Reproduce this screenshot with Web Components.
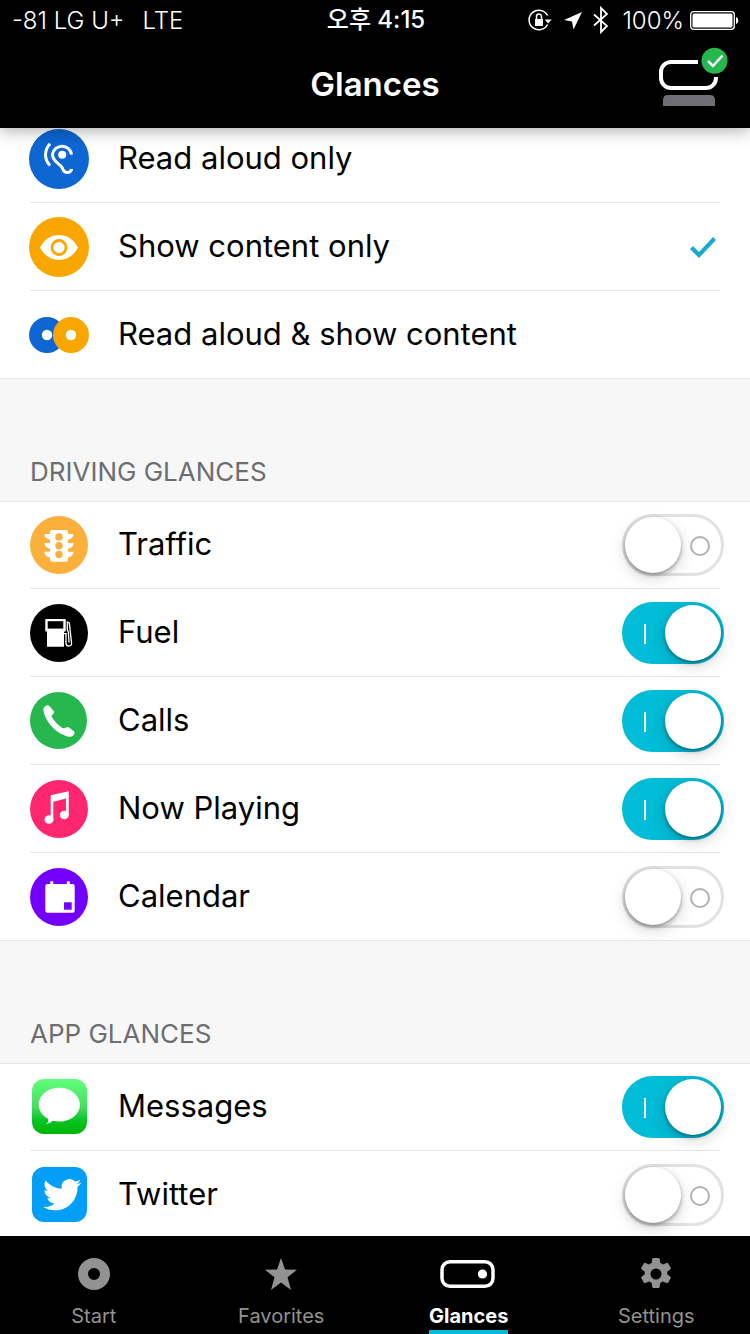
<!DOCTYPE html>
<html lang="en">
<head>
<meta charset="utf-8">
<meta name="viewport" content="width=device-width, initial-scale=1">
<title>Glances</title>
<style>
html, body {
    height: 100%;
    margin: 0;
}
body {
    --accent: #00bcd6;
    --line: #e6e6e6;
    --muted: #6d6d72;
    font-family: Inter, "Noto Sans CJK KR", sans-serif;
    color: #000;
    background: #fff;
}
</style>
</head>
<body>

<app-screen>
    <status-bar slot="top">
        <span slot="left">-81 LG U+</span>
        <span slot="left">LTE</span>
        <span slot="time">오후 4:15</span>
        <span slot="battery">100%</span>
    </status-bar>
    <nav-header slot="top">Glances</nav-header>

    <glance-group>
        <glance-option>
            <svg slot="icon" viewBox="0 0 60 60">
                <circle cx="30" cy="30" r="30" fill="#0d66d2"/>
                <circle cx="33.200" cy="25.700" r="4" fill="#fff"/>
                <path d="M42.500 25.700a9.600 9.600 0 0 0-19-.5c-.3 7 6.500 9 9.300 13 1.700 2.500 1.500 5.300 5.200 5.300 2.700 0 4.300-1.300 4.700-3.500" fill="none" stroke="#fff" stroke-width="3"/>
                <path d="M21 14.800c-6 6.500-6 15.500 0 21.700" fill="none" stroke="#fff" stroke-width="3"/>
            </svg>
            Read aloud only
        </glance-option>
        <glance-option checked>
            <svg slot="icon" viewBox="0 0 60 60">
                <circle cx="30" cy="30" r="30" fill="#f9a700"/>
                <path d="M11 30.500C15 22.500 22 18 30 18s15 4.500 19 12.500C45 38.500 38 43 30 43s-15-4.500-19-12.500z" fill="#fff"/>
                <circle cx="30" cy="30.500" r="7" fill="#fff" stroke="#f9a700" stroke-width="2.800"/>
            </svg>
            Show content only
        </glance-option>
        <glance-option>
            <svg slot="icon" viewBox="0 0 60 60">
                <circle cx="18" cy="30" r="18" fill="#0d66d2"/>
                <circle cx="18" cy="30" r="5.200" fill="#fff"/>
                <circle cx="42" cy="30" r="18" fill="#f9a700"/>
                <circle cx="42" cy="30" r="5.200" fill="#fff"/>
            </svg>
            Read aloud &amp; show content
        </glance-option>
    </glance-group>

    <glance-group>
        <span slot="title">DRIVING GLANCES</span>
        <glance-toggle>
            <svg slot="icon" viewBox="0 0 60 60">
                <circle cx="30" cy="30" r="29" fill="#fbb03b"/>
                <path d="M21 17q0-2 2-2h14q2 0 2 2v2h5.500c0 3-2 5-5.500 5.700v3.300h5.500c0 3-2 5-5.500 5.700v3h5.500c0 3-2 5-5.500 5.700v2.300q0 2-2 2H23q-2 0-2-2v-2.300c-3.500-.7-5.500-2.700-5.500-5.700H21v-3c-3.500-.7-5.500-2.700-5.500-5.700H21v-3.300c-3.500-.7-5.500-2.700-5.500-5.700H21z" fill="#fff"/>
                <g fill="#fbb03b"><circle cx="30" cy="22" r="3.700"/><circle cx="30" cy="30.700" r="3.700"/><circle cx="30" cy="39.400" r="3.700"/></g>
            </svg>
            Traffic
        </glance-toggle>
        <glance-toggle checked>
            <svg slot="icon" viewBox="0 0 60 60">
                <circle cx="30" cy="30" r="29"/>
                <path d="M16.300 16h20.400v12.600H35v15.100H18V28.600h-1.700z" fill="#fff"/>
                <path d="M18.700 18.200h15.600v7.400H18.700z"/>
                <path d="M35 30.700h2v9.500q0 2.800 2.800 2.800 3.200 0 2.700-3.500L40.300 20l-2-1v8l1 2 .8 10.500" fill="none" stroke="#fff" stroke-width="1.300"/>
            </svg>
            Fuel
        </glance-toggle>
        <glance-toggle checked>
            <svg slot="icon" viewBox="0 0 60 60">
                <circle cx="29.500" cy="29.500" r="28.500" fill="#26b74f"/>
                <path d="M20.300 15q-.8-1.200-2.200-.7-3.700 1.300-3.800 4.200C15.500 30 27.500 43.500 40 45.700q4.200.5 5.400-3.200.5-1.400-.5-2.200L40 36.500q-1-.7-2.200-.3l-2.600 1q-1 .3-1.900-.3c-4.500-2.900-7.800-6.400-10.300-10.600q-.5-1 0-2l1.800-2q.7-1 .1-2.100z" fill="#fff"/>
            </svg>
            Calls
        </glance-toggle>
        <glance-toggle checked>
            <svg slot="icon" viewBox="0 0 60 60">
                <circle cx="30" cy="30" r="29" fill="#ff2670"/>
                <path d="M21.700 16.300l18-4v23.200h-2.700V19.600l-12.700 3.200v18h-2.600z" fill="#fff"/>
                <ellipse cx="20" cy="40.500" rx="4.500" ry="4.200" fill="#fff"/>
                <ellipse cx="35.300" cy="36" rx="4.500" ry="4.200" fill="#fff"/>
            </svg>
            Now Playing
        </glance-toggle>
        <glance-toggle>
            <svg slot="icon" viewBox="0 0 60 60">
                <circle cx="30" cy="30" r="29" fill="#7300ff"/>
                <rect x="16.300" y="17" width="29.400" height="28.700" rx="2" fill="#fff"/>
                <path d="M21.300 14.300h3V18h-3zM37.800 14.300h3V18h-3z" fill="#fff"/>
                <path d="M35 35.300h7.700v7.400H35z" fill="#7300ff"/>
            </svg>
            Calendar
        </glance-toggle>
    </glance-group>

    <glance-group>
        <span slot="title">APP GLANCES</span>
        <glance-toggle checked>
            <svg slot="icon" viewBox="0 0 60 60">
                <defs><linearGradient id="msg" x2="0" y2="1"><stop stop-color="#60ff7c"/><stop offset=".5" stop-color="#45df60"/><stop offset=".75" stop-color="#08c526"/><stop offset="1" stop-color="#00b500"/></linearGradient></defs>
                <rect x="3" y="2" width="55" height="55" rx="12" fill="url(#msg)"/>
                <path d="M30.300 10.800c11.400 0 20.600 7.500 20.600 17s-9.200 16.800-20.600 16.800q-3.400 0-6.500-.8-2.600 2.600-6.600 3.500 2.600-2.300 2.200-5.400C13.500 39 9.700 33.800 9.700 27.800c0-9.500 9.200-17 20.600-17z" fill="#fff"/>
            </svg>
            Messages
        </glance-toggle>
        <glance-toggle>
            <svg slot="icon" viewBox="0 0 60 60">
                <rect x="3" y="2" width="55" height="55" rx="12" fill="#039ff7"/>
                <path transform="translate(14 10.500) scale(1.600)" d="M23.950 4.570a10 10 0 0 1-2.820.770 4.960 4.960 0 0 0 2.160-2.720c-.950.550-2 .950-3.130 1.180a4.920 4.920 0 0 0-8.380 4.480C7.690 8.090 4.070 6.130 1.640 3.160a4.820 4.820 0 0 0-.670 2.480c0 1.710.870 3.210 2.190 4.100a4.900 4.900 0 0 1-2.230-.620v.060a4.920 4.920 0 0 0 3.950 4.830 5 5 0 0 1-2.210.080 4.940 4.940 0 0 0 4.600 3.420A9.870 9.870 0 0 1 0 19.540a13.990 13.990 0 0 0 7.550 2.210c9.050 0 14-7.500 14-13.980 0-.210 0-.420-.020-.630a9.940 9.940 0 0 0 2.460-2.550z" fill="#fff"/>
            </svg>
            Twitter
        </glance-toggle>
    </glance-group>

    <tab-bar slot="bottom">
        <tab-item href="#start">
            <svg slot="icon" width="32" height="32"><circle cx="16" cy="16" r="11" fill="none" stroke="currentColor" stroke-width="10"/></svg>
            Start
        </tab-item>
        <tab-item href="#favorites">
            <svg slot="icon" width="32" height="32"><path d="M16 0l4 11.500 12 .3-9.500 7.400L26 32l-10-7.400L6 32l3.500-12.800L0 11.800l12-.3z" fill="currentColor"/></svg>
            Favorites
        </tab-item>
        <tab-item href="#glances" active>
            <svg slot="icon" width="58" height="32"><rect x="2" y="3.700" width="51" height="24.600" rx="8" fill="none" stroke="currentColor" stroke-width="3.500"/><circle cx="42.500" cy="16" r="4.600" fill="currentColor"/></svg>
            Glances
        </tab-item>
        <tab-item href="#settings">
            <svg slot="icon" width="32" height="32"><path d="M13.500 0h5q1 0 1.200 1l.6 4q1.300.5 2.600 1.400l3.800-1.500q1-.4 1.500.5l2.500 4.300q.5.900-.3 1.500l-3.200 2.500q.2 1.300 0 2.600l3.200 2.500q.8.600.3 1.500l-2.500 4.300q-.5.900-1.500.5l-3.800-1.500q-1.300.9-2.600 1.400l-.6 4q-.2 1-1.200 1h-5q-1 0-1.200-1l-.6-4q-1.300-.5-2.600-1.400l-3.800 1.500q-1 .4-1.500-.5l-2.500-4.300q-.5-.9.300-1.500l3.200-2.500q-.2-1.300 0-2.600l-3.200-2.500q-.8-.6-.3-1.500l2.500-4.300q.5-.9 1.500-.5l3.800 1.500q1.300-.9 2.600-1.400l.6-4q.2-1 1.200-1zM16 10.500a5.500 5.500 0 1 0 0 11 5.500 5.500 0 0 0 0-11z" fill="currentColor" fill-rule="evenodd"/></svg>
            Settings
        </tab-item>
    </tab-bar>
</app-screen>

<script>
const StatusEl = document.createElement('template')
StatusEl.innerHTML = `<style>
:host {
    display: grid;
    grid-template-columns: 1fr auto 1fr;
    align-items: center;
    height: 40px;
    padding: 0 10px 0 12px;
    font-size: 24px;
    font-weight: 300;
}
.left {
    display: flex;
    gap: 18px;
}
.time {
    font-weight: 500;
    line-height: 32px;
}
.right {
    display: flex;
    align-items: center;
    justify-content: flex-end;
}
.battery {
    margin: 0 6px 0 14px;
}
</style>
<div class="left"><slot name="left"></slot></div>
<div class="time"><slot name="time"></slot></div>
<div class="right">
    <svg width="82" height="32" fill="none" stroke="#fff">
        <path d="M21.600 11.500a9.800 9.800 0 1 0 0 9" stroke-width="1.500"/>
        <path d="M18.700 15.500h7l-3.500 4z" fill="#fff" stroke="none"/>
        <path d="M9 15h8v7h-8z" fill="#fff" stroke="none"/>
        <path d="M10.500 15v-2.500a2.500 2.500 0 0 1 5 0V15" stroke-width="1.500"/>
        <path d="M56 8l-8.500 17.500-1.500-8-8-1.500z" fill="#fff" stroke="none"/>
        <path d="M68 10.500l13 11.500-6 6V4l6 6-13 11.500" stroke-width="1.800"/>
    </svg>
    <span class="battery"><slot name="battery"></slot></span>
    <svg width="50" height="20">
        <rect x=".7" y="1.700" width="43.600" height="17.600" rx="3" fill="none" stroke="#fff" stroke-width="1.300"/>
        <rect x="2.500" y="3.500" width="40" height="14" rx="1.500" fill="#fff"/>
        <path d="M46 7c3 .5 3 6.500 0 7z" fill="#fff"/>
    </svg>
</div>`

class StatusBar extends HTMLElement {
    constructor() {
        super()
        this.attachShadow({mode: 'open'})
        this.shadowRoot.appendChild(StatusEl.content.cloneNode(true))
    }
}
customElements.define('status-bar', StatusBar)

const HeaderEl = document.createElement('template')
HeaderEl.innerHTML = `<style>
:host {
    display: grid;
    grid-template-columns: 1fr auto 1fr;
    align-items: center;
    height: 88px;
    padding: 0 20px;
}
h1 {
    grid-column: 2;
    margin: 0;
    font-size: 33px;
    font-weight: 600;
}
button {
    justify-self: end;
    display: block;
    padding: 0;
    border: 0;
    background: none;
}
svg {
    display: block;
}
</style>
<h1><slot></slot></h1>
<button aria-label="Display connected">
    <svg width="72" height="76">
        <path d="M40 16H13a10 10 0 0 0-10 10v6a10 10 0 0 0 10 10h35a10 10 0 0 0 10-10v-1" fill="none" stroke="#fff" stroke-width="4"/>
        <path d="M5 60v-6q0-5 5-5h42q5 0 5 5v6z" fill="#6e6e74"/>
        <circle cx="56.500" cy="14.700" r="13" fill="#26b74f"/>
        <path d="M50 15l5 5 9.500-10.500" fill="none" stroke="#fff" stroke-width="2.500"/>
    </svg>
</button>`

class NavHeader extends HTMLElement {
    constructor() {
        super()
        this.attachShadow({mode: 'open'})
        this.shadowRoot.appendChild(HeaderEl.content.cloneNode(true))
    }
}
customElements.define('nav-header', NavHeader)

const GroupEl = document.createElement('template')
GroupEl.innerHTML = `<style>
:host {
    display: block;
}
h2 {
    display: flex;
    align-items: flex-end;
    box-sizing: border-box;
    height: 122px;
    margin: 0;
    padding: 0 30px 13px;
    font-size: 26px;
    font-weight: 400;
    line-height: 32px;
    color: var(--muted);
    background: #f7f7f7;
}
.rows {
    box-shadow: inset 0 1px var(--line), inset 0 -1px var(--line);
}
</style>
<div class="rows"><slot></slot></div>`

class GlanceGroup extends HTMLElement {
    constructor() {
        super()
        this.attachShadow({mode: 'open'})
        this.shadowRoot.appendChild(GroupEl.content.cloneNode(true))
        // only titled groups get the grey band above the rows
        if (this.querySelector('[slot=title]')) {
            const title = document.createElement('h2')
            title.innerHTML = '<slot name="title"></slot>'
            this.shadowRoot.querySelector('.rows').before(title)
        }
    }
}
customElements.define('glance-group', GlanceGroup)

const rowStyle = `
:host {
    display: block;
    background: linear-gradient(var(--line), var(--line)) 30px 100% / calc(100% - 60px) 1px no-repeat;
}
label {
    display: flex;
    align-items: center;
    gap: 29px;
    height: 88px;
    padding: 0 26px 0 29px;
    font-size: 31px;
}
::slotted(svg) {
    display: block;
    flex: none;
    width: 60px;
    height: 60px;
}
.text {
    flex: 1;
    padding-bottom: 4px;
}
input {
    appearance: none;
    flex: none;
    margin: 0;
}`

const OptionEl = document.createElement('template')
OptionEl.innerHTML = `<style>${rowStyle}
input {
    width: 30px;
    height: 24px;
    margin-right: 6px;
}
input:checked {
    background: #14abcf;
    clip-path: polygon(2px 14px, 5px 11px, 11px 17px, 25px 2px, 28px 5px, 11px 23px);
}
</style>
<label>
    <slot name="icon"></slot>
    <span class="text"><slot></slot></span>
    <input type="radio" name="mode">
</label>`

class GlanceOption extends HTMLElement {
    constructor() {
        super()
        this.attachShadow({mode: 'open'})
        this.shadowRoot.appendChild(OptionEl.content.cloneNode(true))
        this.input = this.shadowRoot.querySelector('input')
    }

    connectedCallback() {
        this.input.checked = this.hasAttribute('checked')
        // radios in separate shadow roots do not share a group
        this.input.addEventListener('change', () => {
            this.parentElement.querySelectorAll('glance-option').forEach(el => {
                if (el !== this) el.input.checked = false
            })
        })
    }
}
customElements.define('glance-option', GlanceOption)

const ToggleEl = document.createElement('template')
ToggleEl.innerHTML = `<style>${rowStyle}
input {
    display: flex;
    align-items: center;
    justify-content: space-between;
    box-sizing: border-box;
    width: 102px;
    height: 62px;
    border: 3px solid #e2e2e2;
    border-radius: 31px;
}
input::before {
    content: "";
    flex: none;
    width: 56px;
    height: 56px;
    border-radius: 50%;
    background: #fff;
    box-shadow: 0 2px 4px rgba(0, 0, 0, .35), 0 6px 16px rgba(0, 0, 0, .15);
}
input::after {
    content: "";
    box-sizing: border-box;
    width: 20px;
    height: 20px;
    margin: 2px 11px 0 0;
    border: 2px solid #b2b2b2;
    border-radius: 50%;
}
input:checked {
    flex-direction: row-reverse;
    border-color: var(--accent);
    background: var(--accent);
}
input:checked::after {
    width: 2px;
    margin: 2px 0 0 19px;
    border: 0;
    border-radius: 0;
    background: #fff;
}
</style>
<label>
    <slot name="icon"></slot>
    <span class="text"><slot></slot></span>
    <input type="checkbox" role="switch">
</label>`

class GlanceToggle extends HTMLElement {
    constructor() {
        super()
        this.attachShadow({mode: 'open'})
        this.shadowRoot.appendChild(ToggleEl.content.cloneNode(true))
    }

    connectedCallback() {
        this.shadowRoot.querySelector('input').checked = this.hasAttribute('checked')
    }
}
customElements.define('glance-toggle', GlanceToggle)

const TabEl = document.createElement('template')
TabEl.innerHTML = `<style>
:host {
    display: block;
    flex: 1 1 0;
    color: #929292;
}
:host([active]) {
    color: #fff;
    font-weight: 700;
}
a {
    display: flex;
    flex-direction: column;
    align-items: center;
    gap: 12px;
    padding-top: 22px;
    color: inherit;
    text-decoration: none;
}
.label {
    font-size: 20px;
    line-height: 28px;
    border-bottom: 4px solid transparent;
}
:host([active]) .label {
    border-color: var(--accent);
}
</style>
<a>
    <slot name="icon"></slot>
    <span class="label"><slot></slot></span>
</a>`

class TabItem extends HTMLElement {
    constructor() {
        super()
        this.attachShadow({mode: 'open'})
        this.shadowRoot.appendChild(TabEl.content.cloneNode(true))
    }

    connectedCallback() {
        this.shadowRoot.querySelector('a').href = this.getAttribute('href')
    }
}
customElements.define('tab-item', TabItem)

const TabBarEl = document.createElement('template')
TabBarEl.innerHTML = `<style>
:host {
    display: block;
}
nav {
    display: flex;
    background: #000;
}
</style>
<nav><slot></slot></nav>`

class TabBar extends HTMLElement {
    constructor() {
        super()
        this.attachShadow({mode: 'open'})
        this.shadowRoot.appendChild(TabBarEl.content.cloneNode(true))
    }
}
customElements.define('tab-bar', TabBar)

const ScreenEl = document.createElement('template')
ScreenEl.innerHTML = `<style>
:host {
    display: flex;
    flex-direction: column;
    height: 100vh;
}
header {
    position: relative;
    z-index: 1;
    color: #fff;
    background: #000;
    box-shadow: 0 2px 16px rgba(0, 0, 0, .35);
}
main {
    flex: 1;
    min-height: 0;
    overflow-y: auto;
    scrollbar-width: none;
}
</style>
<header><slot name="top"></slot></header>
<main><slot></slot></main>
<slot name="bottom"></slot>`

class AppScreen extends HTMLElement {
    constructor() {
        super()
        this.attachShadow({mode: 'open'})
        this.shadowRoot.appendChild(ScreenEl.content.cloneNode(true))
    }

    connectedCallback() {
        // list opens slightly scrolled under the header
        this.shadowRoot.querySelector('main').scrollTop = 13
    }
}
customElements.define('app-screen', AppScreen)
</script>
</body>
</html>
